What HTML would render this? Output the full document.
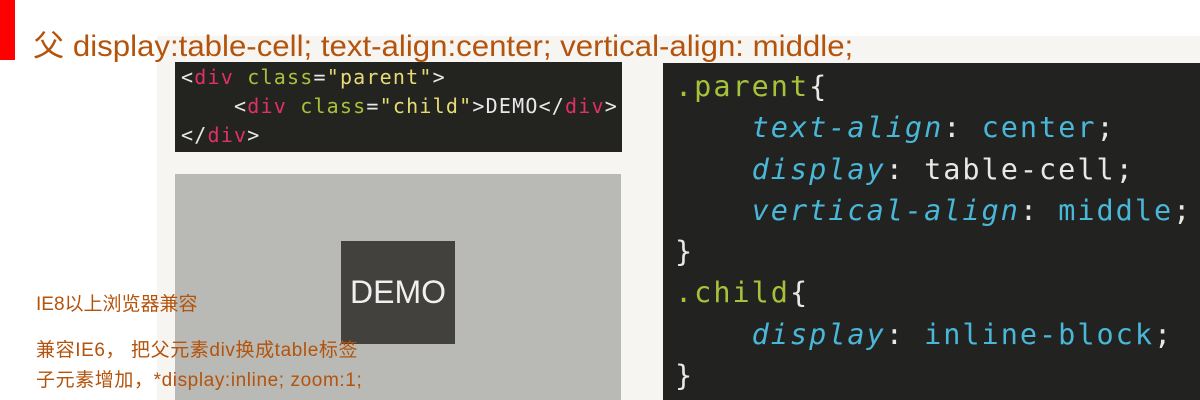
<!DOCTYPE html>
<html><head><meta charset="utf-8"><style>
*{margin:0;padding:0}
body{width:1200px;height:400px;background:#fff;position:relative;overflow:hidden;font-family:"Liberation Sans","Noto Sans CJK SC",sans-serif}
.a{position:absolute}
.t{white-space:nowrap;transform-origin:0 0}
.mono{font-family:"DejaVu Sans Mono","Liberation Mono",monospace;white-space:pre}
.k{color:#e0306a}.g{color:#a6c23a}.s{color:#e6db74}.w{color:#e8e8e8}.c{color:#49b7d8}
</style></head><body>
<div class="a" style="left:0;top:0;width:15px;height:60px;background:#ff0000"></div>
<div class="a" style="left:157px;top:36px;width:1043px;height:364px;background:#f6f5f2"></div>
<div class="a t" style="left:33px;top:21px;font-size:30px;color:#b4530c;transform:scaleX(1.04)">父 display:table-cell; text-align:center; vertical-align: middle;</div>
<div class="a" style="left:175px;top:62px;width:447px;height:90px;background:#232320"></div>
<div class="a mono" style="left:181px;top:63px;font-size:20px;line-height:29px;letter-spacing:1.2px;color:#e8e8e8">&lt;<span class="k">div</span> <span class="g">class</span>=<span class="s">"parent"</span>&gt;
    &lt;<span class="k">div</span> <span class="g">class</span>=<span class="s">"child"</span>&gt;DEMO&lt;/<span class="k">div</span>&gt;
&lt;/<span class="k">div</span>&gt;</div>
<div class="a" style="left:175px;top:174px;width:446px;height:226px;background:#b9b9b5"></div>
<div class="a" style="left:341px;top:241px;width:114px;height:103px;background:#42413d;color:#f0f0f0;font-size:32px;line-height:103px;text-align:center">DEMO</div>
<div class="a" style="left:663px;top:63px;width:537px;height:337px;background:#222220"></div>
<div class="a mono" style="left:675px;top:66px;font-size:28.5px;line-height:41.3px;letter-spacing:2px;color:#e8e8e8"><span class="g">.parent</span>{
    <i class="c">text-align</i>: <span class="c">center</span>;
    <i class="c">display</i>: table-cell;
    <i class="c">vertical-align</i>: <span class="c">middle</span>;
}
<span class="g">.child</span>{
    <i class="c">display</i>: <span class="c">inline-block</span>;
}</div>
<div class="a" style="left:36px;top:294px;font-size:19px;color:#b4530c;line-height:22px;white-space:nowrap">IE8以上浏览器兼容</div>
<div class="a" style="left:36px;top:336px;font-size:19px;color:#b4530c;line-height:30px;white-space:nowrap;letter-spacing:0.6px">兼容IE6， 把父元素div换成table标签<br>子元素增加，*display:inline; zoom:1;</div>
</body></html>
